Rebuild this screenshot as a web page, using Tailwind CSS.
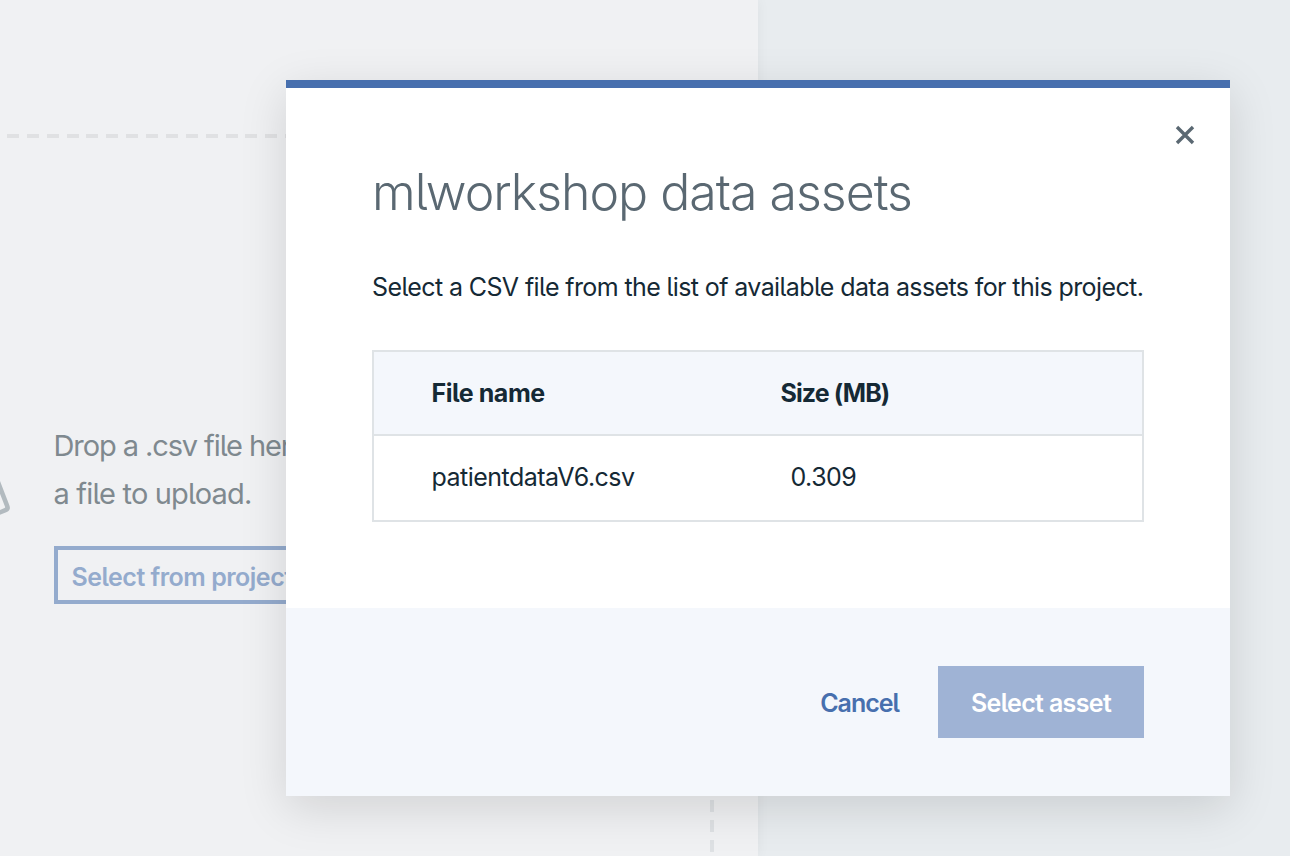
<!DOCTYPE html>
<html lang="en">
<head>
<meta charset="utf-8">
<title>mlworkshop data assets</title>
<script src="https://cdn.jsdelivr.net/npm/@tailwindcss/browser@4"></script>
</head>
<body class="relative flex h-[856px] w-[1290px] overflow-hidden bg-[#e8ecef] font-['Inter',sans-serif] [font-feature-settings:'cv05']">
  <main class="h-full w-[758px] bg-[#f0f1f3] pt-[134px] shadow-[0_0_12px_rgba(0,0,0,0.05)]">
    <section class="relative h-[722px] w-[714px] pt-[288px]">
      <div class="absolute top-0 right-0 left-[7px] h-1 bg-[repeating-linear-gradient(90deg,#e0e1e3_0_12px,transparent_12px_19.87px)]"></div>
      <div class="absolute top-[5.5px] right-0 bottom-0 w-1 bg-[repeating-linear-gradient(180deg,#dee1e4_0_12px,transparent_12px_20px)]"></div>
      <svg class="absolute top-[340px] left-0 h-12 w-4" viewBox="0 0 16 48" fill="none" stroke="#b2babf" stroke-width="4.6"><path d="M-4 3 7.2 32Q8.4 35 5.4 36.2L-3 39.6"/></svg>
      <div class="flex flex-col items-start pl-[53.5px]">
        <p class="text-[29px] leading-[48px] whitespace-nowrap text-[#7f898f]"><span class="tracking-[-1.1px]">Drop a .csv file here or browse</span><br><span class="tracking-[-0.83px]">a file to upload.</span></p>
        <button class="mt-7 h-[58px] border-4 border-[#94abcd] px-3.5 pt-1.5 text-[25px] font-semibold tracking-[-0.5px] whitespace-nowrap text-[#94abcd]">Select from project</button>
      </div>
    </section>
  </main>
  <div role="dialog" class="absolute top-20 left-[286px] flex h-[716px] w-[944px] flex-col border-t-8 border-[#476fae] bg-white text-[#152935] shadow-[0_12px_44px_rgba(0,0,0,0.13)]">
    <button class="absolute top-[37px] right-[35px]" aria-label="Close"><svg class="size-5" viewBox="0 0 20 20" stroke="#5a6872" stroke-width="3.4"><path d="M2 2 18 18M18 2 2 18"/></svg></button>
    <div class="flex-1 px-[86px] pt-[72px]">
      <h1 class="text-[50px] leading-[64px] font-light tracking-[-1px] whitespace-nowrap text-[#5a6872]">mlworkshop data assets</h1>
      <p class="mt-[45px] text-[25px] leading-9 tracking-[-0.61px] whitespace-nowrap">Select a CSV file from the list of available data assets for this project.</p>
      <div class="mt-[45px] border-2 border-[#dfe3e6] text-[25px]">
        <div class="flex h-[84px] items-center border-b-2 border-[#dfe3e6] bg-[#f4f7fc] pt-0.5 pl-[57.5px] font-bold"><div class="w-[349px] tracking-[-0.45px]">File name</div><div class="tracking-[-0.9px]">Size (MB)</div></div>
        <div class="flex h-[84px] items-center pl-[57.5px] tracking-[-0.52px]"><div class="w-[359px]">patientdataV6.csv</div><div>0.309</div></div>
      </div>
    </div>
    <div class="flex h-[188px] items-center justify-end gap-[39px] bg-[#f4f7fc] pr-[86px] text-[25px] font-semibold">
      <button class="pt-1 tracking-[-1px] text-[#476fae]">Cancel</button>
      <button class="h-[72px] w-[206px] bg-[#9fb3d5] pt-1 tracking-[-0.65px] text-white">Select asset</button>
    </div>
  </div>
</body>
</html>
